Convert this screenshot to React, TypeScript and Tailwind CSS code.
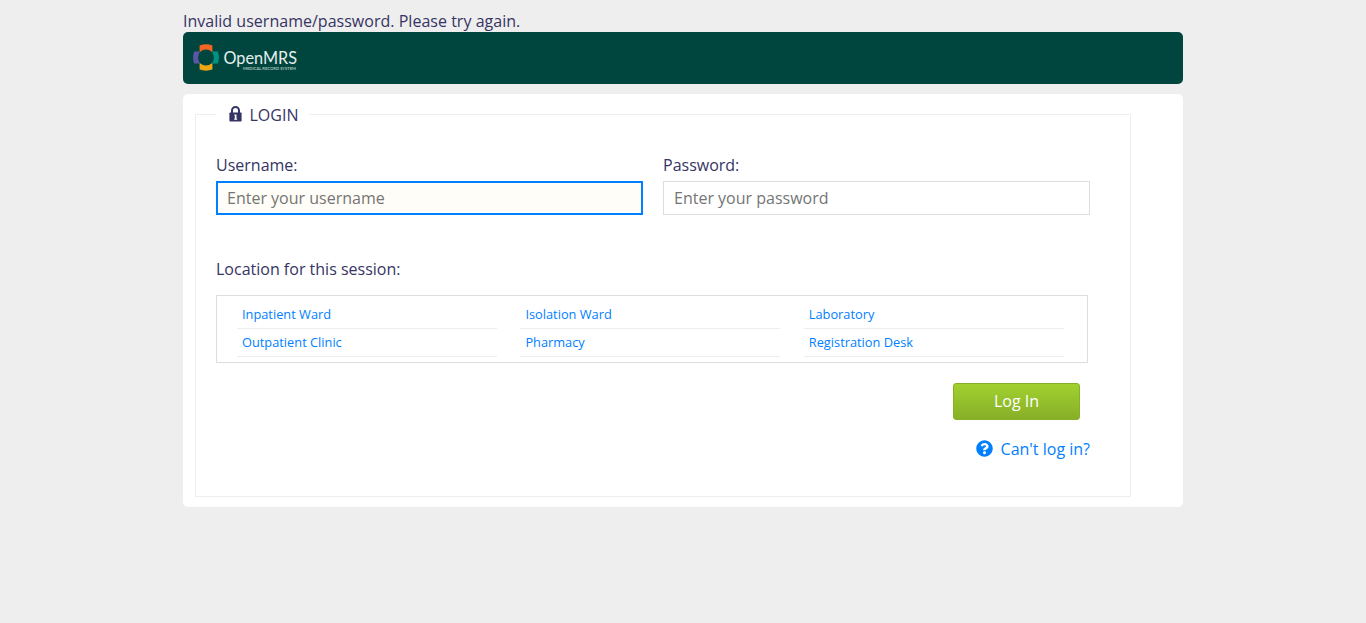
import { FaQuestionCircle } from "react-icons/fa";

const locations = [
  "Inpatient Ward",
  "Isolation Ward",
  "Laboratory",
  "Outpatient Clinic",
  "Pharmacy",
  "Registration Desk",
];

function Logo() {
  return (
    <svg width="106" height="28" viewBox="0 0 106 28" aria-label="OpenMRS">
      <path d="M6.6 1.4Q13 -.8 19.4 1.4V8H6.6Z" fill="#f26522" />
      <path d="M6.6 25.6Q13 27.8 19.4 25.6V19H6.6Z" fill="#eea616" />
      <path d="M1.2 7.4Q-1 13.5 1.2 19.6H6.6V7.4Z" fill="#5b57a6" />
      <path d="M24.8 7.4Q27 13.5 24.8 19.6H19.4V7.4Z" fill="#009384" />
      <circle cx="13" cy="13.5" r="8" fill="#00463f" />
      <text x="30.5" y="20" textLength="73.5" lengthAdjust="spacingAndGlyphs" fill="#e6eeec" fontSize="16.5" fontFamily="Lato, sans-serif">OpenMRS</text>
      <text x="50" y="25.7" textLength="53" lengthAdjust="spacingAndGlyphs" fill="#a9c2bd" fontSize="3.6" fontWeight="700" fontFamily="Lato, sans-serif">MEDICAL RECORD SYSTEM</text>
    </svg>
  );
}

function LockIcon() {
  return (
    <svg width="13" height="16" viewBox="0 0 13 16" className="mr-2 mb-[2px] ml-[0.5px]" aria-hidden="true">
      <path d="M3 7V4.5a3.5 3.5 0 0 1 7 0V7" fill="none" stroke="#363463" strokeWidth="2" />
      <rect x="0.4" y="6.5" width="12.2" height="9" rx="0.8" fill="#363463" />
      <path d="M5.3 8.6h2.2v4.2h.7v.9H5.1v-.9h.7V9.6h-.5Z" fill="#fff" />
    </svg>
  );
}

export default function App() {
  return (
    <div className="min-h-screen bg-[#eeeeee] pt-[10px] font-['Open_Sans',sans-serif] text-base leading-[22px] text-[#363463]">
      <div className="mx-auto w-[1000px]">
        <div className="tracking-[0.02px]">Invalid username/password. Please try again.</div>
        <header className="flex h-[52px] items-center rounded-[5px] bg-[#00463f] pl-[10px]">
          <Logo />
        </header>
        <main className="mt-[10px] h-[413px] rounded-[5px] bg-white pt-[10px] pl-3">
          <form>
            <fieldset className="h-[393px] w-[936px] border border-[#eeeeee] px-5">
              <legend className="flex h-[21px] w-[93px] items-center pl-3">
                <LockIcon />
                LOGIN
              </legend>
              <div className="mt-[29px] flex gap-5">
                <label className="block w-[427px]">
                  <span className="block h-[27px]">Username:</span>
                  <input placeholder="Enter your username" className="block h-[34px] w-full border-2 border-[#007fff] bg-[#fffdf7] px-[9px] outline-none placeholder:text-[#757575]" />
                </label>
                <label className="block w-[427px]">
                  <span className="block h-[27px]">Password:</span>
                  <input type="password" placeholder="Enter your password" className="block h-[34px] w-full border border-[#dddddd] bg-white px-[10px] outline-none placeholder:text-[#757575]" />
                </label>
              </div>
              <p className="mt-[43px]">Location for this session:</p>
              <ul className="mt-[15px] grid h-[68px] w-[872px] grid-cols-[260px_260px_260px] content-start gap-x-[23.4px] border border-[#dddddd] pt-[5px] pl-5 text-[12.8px] leading-[27px] text-[#007fff]">
                {locations.map((name) => (
                  <li key={name} className="h-7 border-b border-[#eeeeee] pl-[5px]">{name}</li>
                ))}
              </ul>
              <div className="mt-5 flex w-[864px] justify-end">
                <button type="button" className="h-[37px] w-[127px] rounded-[3px] border border-[#88af28] bg-linear-to-b from-[#a1d12f] to-[#88af28] pb-[2px] text-white">Log In</button>
              </div>
              <div className="mt-[18px] flex w-[874px] items-center justify-end text-[#007fff]">
                <FaQuestionCircle size={17} className="mr-2 mb-[2px]" />
                <a>Can't log in?</a>
              </div>
            </fieldset>
          </form>
        </main>
      </div>
    </div>
  );
}
